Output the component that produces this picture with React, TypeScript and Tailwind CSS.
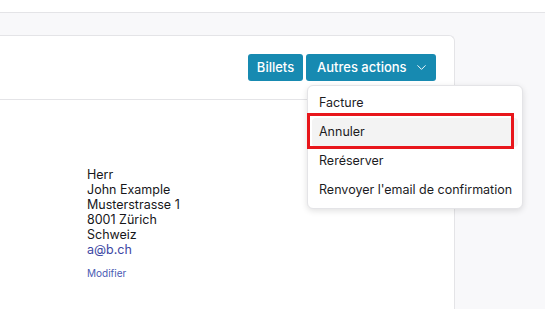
import { ChevronDown } from "lucide-react";

const menuItems = ["Facture", "Annuler", "Reréserver", "Renvoyer l'email de confirmation"];

function ActionsMenu() {
  return (
    <div className="absolute left-[1px] top-[31px] z-10 w-[216px] rounded-[6px] border border-[#e4e4e7] bg-white px-[4px] py-[3px] shadow-[0_2px_6px_rgba(0,0,0,0.12)]">
      {menuItems.map((item) => (
        <div
          key={item}
          className={
            "flex h-[29px] items-center whitespace-nowrap rounded-[4px] px-[7px] text-[12.5px] text-[#1c1c1f] " +
            (item === "Annuler" ? "bg-[#f3f3f3]" : "")
          }
        >
          {item}
        </div>
      ))}
    </div>
  );
}

export default function App() {
  const address = ["Herr", "John Example", "Musterstrasse 1", "8001 Zürich", "Schweiz"];

  return (
    <div className="relative flex h-[309px] w-[545px] flex-col overflow-hidden bg-[#f8f8fa] font-['Inter',sans-serif]">
      <div className="h-[13px] shrink-0 border-b border-[#e4e4e7] bg-white" />
      <div className="flex flex-1 pt-[22px]">
        <div className="flex w-[455px] flex-col rounded-tr-[6px] border-r border-t border-[#e4e4e7] bg-white">
          <div className="flex h-[64px] items-center justify-end gap-[3px] border-b border-[#e4e4e7] pr-[18px]">
            <button className="flex h-[27px] w-[55px] items-center justify-center rounded-[3px] bg-[#178ab1] text-[13px] font-medium text-white">
              Billets
            </button>
            <div className="relative">
              <button className="flex h-[27px] w-[130px] items-center gap-[7px] rounded-[3px] bg-[#178ab1] pl-[11px] text-[13px] font-medium text-white">
                Autres actions
                <ChevronDown size={15} strokeWidth={1.5} />
              </button>
              <ActionsMenu />
            </div>
          </div>
          <div className="flex flex-col pl-[87px] pt-[67px] text-[12.5px] leading-[15px] text-[#17171a]">
            {address.map((line) => (
              <span key={line}>{line}</span>
            ))}
            <span className="text-[#3c47a3]">a@b.ch</span>
            <span className="mt-[9px] text-[10px] text-[#4a5ab3]">Modifier</span>
          </div>
        </div>
      </div>
      <div className="pointer-events-none absolute left-[307px] top-[113px] z-20 h-[36px] w-[207px] border-[3px] border-[#e8161b]" />
    </div>
  );
}
